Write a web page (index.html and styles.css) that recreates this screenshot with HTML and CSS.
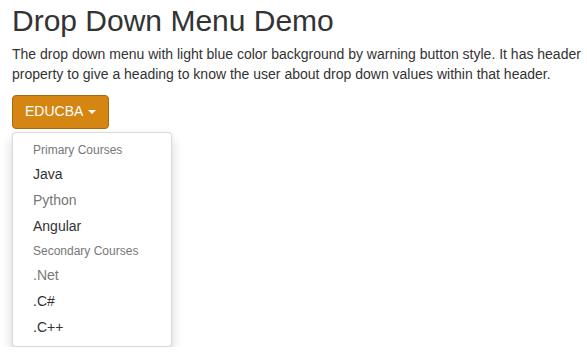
FILE: index.html
```html
<!DOCTYPE html>
<html lang="en">
<head>
    <meta charset="UTF-8">
    <title>Drop Down Menu Demo</title>
    <link rel="stylesheet" href="styles.css">
</head>
<body>
    <div class="container">
        <h2>Drop Down Menu Demo</h2>
        <p>The drop down menu with light blue color background by warning button style. It has header property to give a heading to know the user about drop down values within that header.</p>
        <div class="course-picker">
            <button class="btn btn-warning">EDUCBA <span class="caret"></span></button>
            <ul class="course-list">
                <li class="list-header">Primary Courses</li>
                <li><a href="#">Java</a></li>
                <li class="disabled"><a href="#">Python</a></li>
                <li><a href="#">Angular</a></li>
                <li class="list-header">Secondary Courses</li>
                <li class="disabled"><a href="#">.Net</a></li>
                <li><a href="#">.C#</a></li>
                <li><a href="#">.C++</a></li>
            </ul>
        </div>
    </div>
</body>
</html>
```

FILE: styles.css
```css
body {
    margin: 0;
    font-family: "Liberation Sans", Arial, sans-serif;
    font-size: 14px;
    line-height: 1.42857;
    color: #333;
    background: #fff;
}

.container {
    padding: 0 3px 0 12px;
}

h2 {
    margin: 4px 0 8px;
    font-size: 30px;
    font-weight: normal;
    line-height: 1.1;
}

p {
    margin: 0 0 10px;
}

.course-picker {
    display: flex;
    flex-direction: column;
    align-items: flex-start;
}

.btn {
    display: inline-block;
    padding: 6px 12px;
    font-family: inherit;
    font-size: 14px;
    line-height: 1.42857;
    border: 1px solid transparent;
    border-radius: 4px;
    cursor: pointer;
}

.btn-warning {
    color: #fff;
    background: #d58512;
    border-color: #a86a10;
}

.caret {
    display: inline-block;
    width: 0;
    height: 0;
    margin-left: 2px;
    vertical-align: middle;
    border-top: 4px solid;
    border-right: 4px solid transparent;
    border-left: 4px solid transparent;
}

.course-list {
    box-sizing: border-box;
    width: 160px;
    margin: 3px 0 0;
    padding: 6px 0 5px;
    list-style: none;
    background: #fff;
    border: 1px solid rgba(0, 0, 0, 0.15);
    border-radius: 4px;
    box-shadow: 0 6px 12px rgba(0, 0, 0, 0.175);
}

.course-list a {
    display: block;
    padding: 3px 20px;
    color: #333;
    text-decoration: none;
    white-space: nowrap;
}

.course-list .disabled a {
    color: #777;
}

.list-header {
    padding: 3px 20px;
    font-size: 12px;
    line-height: 1.42857;
    color: #777;
    white-space: nowrap;
}
```
